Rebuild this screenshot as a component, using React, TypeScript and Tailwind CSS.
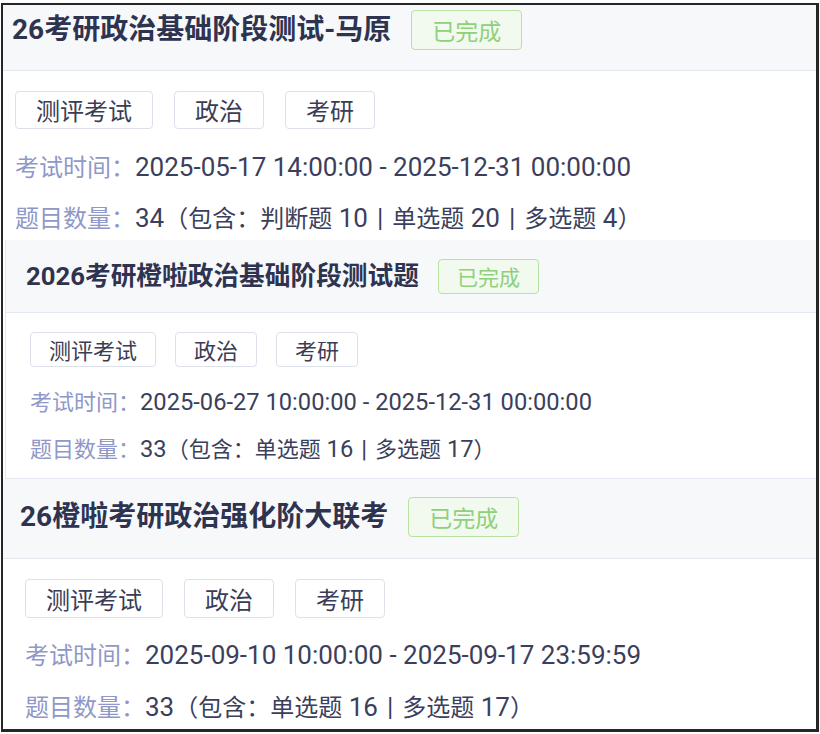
import React from "react";

type Cfg = {
  wrap: string;
  header: string;
  title: string;
  badge: string;
  body: string;
  tags: string;
  tag: string;
  line1: string;
  line2: string;
  label: string;
  value: string;
  sep: string;
};

const c1: Cfg = {
  wrap: "",
  header:
    "flex items-center gap-[20px] bg-[#f7f8fa] border-b border-[#e4e8f0] pl-[9px] pt-[5px] pb-[20px]",
  title:
    "font-[Roboto,'Noto_Sans_CJK_SC',sans-serif] text-[28px] font-bold leading-[40px] text-[#2e3350] whitespace-nowrap",
  badge:
    "h-[40px] px-[20px] text-[23px] leading-[38px] border border-[#b7e2a4] bg-[#f2f9ef] text-[#8fd07c] rounded-[4px]",
  body: "pl-[12px] pt-[20px] pb-[7px] bg-white",
  tags: "flex gap-[21px]",
  tag: "h-[38px] px-[20px] text-[24px] leading-[36px] border border-[#dde1ea] rounded-[4px] text-[#3a3d55] bg-white",
  line1: "mt-[21px] h-[32px] leading-[32px] whitespace-nowrap text-[24px] text-[#3b3f5c]",
  line2: "mt-[19px] h-[32px] leading-[32px] whitespace-nowrap text-[24px] text-[#3b3f5c]",
  label: "text-[#8f98c8]",
  value: "font-[Roboto,'Noto_Sans_CJK_SC',sans-serif] text-[26px]",
  sep: "font-[Roboto,'Noto_Sans_CJK_SC',sans-serif] mx-[9px] text-[26px]",
};

const c2: Cfg = {
  wrap: "ml-[2px] border-l border-b border-[#e4e8f0]",
  header:
    "flex items-center gap-[19px] bg-[#f7f8fa] border-b border-[#e4e8f0] pl-[20px] pt-[19px] pb-[18px]",
  title:
    "font-[Roboto,'Noto_Sans_CJK_SC',sans-serif] text-[25.7px] font-bold leading-[35px] text-[#2e3350] whitespace-nowrap",
  badge:
    "h-[35px] px-[18px] text-[21px] leading-[33px] border border-[#b7e2a4] bg-[#f2f9ef] text-[#8fd07c] rounded-[4px]",
  body: "pl-[24px] pt-[19px] pb-[16px] bg-white",
  tags: "flex gap-[19px]",
  tag: "h-[35px] px-[18px] text-[22px] leading-[33px] border border-[#dde1ea] rounded-[4px] text-[#3a3d55] bg-white",
  line1: "mt-[18px] h-[30px] leading-[30px] whitespace-nowrap text-[22px] text-[#3b3f5c]",
  line2: "mt-[17px] h-[30px] leading-[30px] whitespace-nowrap text-[22px] text-[#3b3f5c]",
  label: "text-[#8f98c8]",
  value: "font-[Roboto,'Noto_Sans_CJK_SC',sans-serif] text-[23.7px]",
  sep: "font-[Roboto,'Noto_Sans_CJK_SC',sans-serif] mx-[8px] text-[23.7px]",
};

const c3: Cfg = {
  wrap: "",
  header:
    "flex items-center gap-[20px] bg-[#f7f8fa] border-b border-[#e4e8f0] pl-[17px] pt-[18px] pb-[21px]",
  title:
    "font-[Roboto,'Noto_Sans_CJK_SC',sans-serif] text-[28px] font-bold leading-[40px] text-[#2e3350] whitespace-nowrap",
  badge:
    "h-[40px] px-[20px] text-[23px] leading-[38px] border border-[#b7e2a4] bg-[#f2f9ef] text-[#8fd07c] rounded-[4px]",
  body: "pl-[22px] pt-[20px] pb-[6px] bg-white",
  tags: "flex gap-[21px]",
  tag: "h-[39px] px-[20px] text-[24px] leading-[37px] border border-[#dde1ea] rounded-[4px] text-[#3a3d55] bg-white",
  line1: "mt-[20px] h-[32px] leading-[32px] whitespace-nowrap text-[24px] text-[#3b3f5c]",
  line2: "mt-[20px] h-[32px] leading-[32px] whitespace-nowrap text-[24px] text-[#3b3f5c]",
  label: "text-[#8f98c8]",
  value: "font-[Roboto,'Noto_Sans_CJK_SC',sans-serif] text-[26px]",
  sep: "font-[Roboto,'Noto_Sans_CJK_SC',sans-serif] mx-[9px] text-[26px]",
};

type Part = { name: string; n: string };

type Exam = {
  title: string;
  time: string;
  count: string;
  parts: Part[];
};

const exams: { cfg: Cfg; exam: Exam }[] = [
  {
    cfg: c1,
    exam: {
      title: "26考研政治基础阶段测试-马原",
      time: "2025-05-17 14:00:00 - 2025-12-31 00:00:00",
      count: "34",
      parts: [
        { name: "判断题", n: "10" },
        { name: "单选题", n: "20" },
        { name: "多选题", n: "4" },
      ],
    },
  },
  {
    cfg: c2,
    exam: {
      title: "2026考研橙啦政治基础阶段测试题",
      time: "2025-06-27 10:00:00 - 2025-12-31 00:00:00",
      count: "33",
      parts: [
        { name: "单选题", n: "16" },
        { name: "多选题", n: "17" },
      ],
    },
  },
  {
    cfg: c3,
    exam: {
      title: "26橙啦考研政治强化阶大联考",
      time: "2025-09-10 10:00:00 - 2025-09-17 23:59:59",
      count: "33",
      parts: [
        { name: "单选题", n: "16" },
        { name: "多选题", n: "17" },
      ],
    },
  },
];

function Card({ cfg, exam }: { cfg: Cfg; exam: Exam }) {
  return (
    <div className={cfg.wrap}>
      <div className={cfg.header}>
        <div className={cfg.title}>{exam.title}</div>
        <div className={cfg.badge}>已完成</div>
      </div>
      <div className={cfg.body}>
        <div className={cfg.tags}>
          {["测评考试", "政治", "考研"].map((t) => (
            <div key={t} className={cfg.tag}>
              {t}
            </div>
          ))}
        </div>
        <div className={cfg.line1}>
          <span className={cfg.label}>考试时间：</span>
          <span className={cfg.value}>{exam.time}</span>
        </div>
        <div className={cfg.line2}>
          <span className={cfg.label}>题目数量：</span>
          <span className={cfg.value}>{exam.count}</span>
          <span>（包含：</span>
          {exam.parts.map((p, i) => (
            <React.Fragment key={p.name}>
              {i > 0 && <span className={cfg.sep}>|</span>}
              <span>{p.name}</span>
              <span className={cfg.value}>{" " + p.n}</span>
            </React.Fragment>
          ))}
          <span>）</span>
        </div>
      </div>
    </div>
  );
}

export default function App() {
  return (
    <div className="w-[820px] h-[734px] bg-white overflow-hidden pt-[3px] pl-[1px] font-['Noto_Sans_CJK_SC',sans-serif]">
      <div className="w-[818px] h-[729px] border-l-2 border-t-2 border-r-[3px] border-b-[3px] border-[#262626] overflow-hidden bg-white">
        {exams.map((e, i) => (
          <Card key={i} cfg={e.cfg} exam={e.exam} />
        ))}
      </div>
    </div>
  );
}
